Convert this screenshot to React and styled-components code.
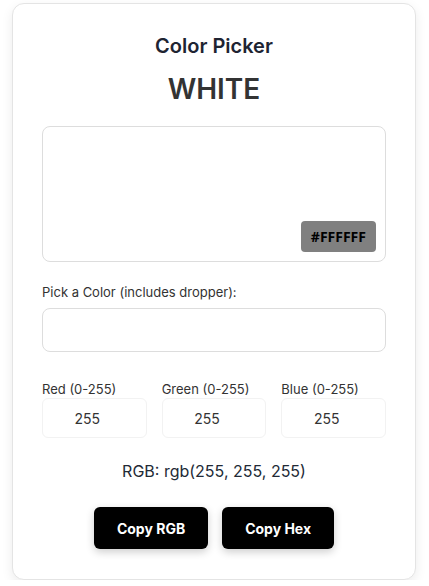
import React from 'react'
import styled, { createGlobalStyle } from 'styled-components'

const GlobalStyle = createGlobalStyle`
    body {
        margin: 0;
        background: #ffffff;
        font-family: Inter, "Open Sans", sans-serif;
    }
`

const Card = styled.div`
    box-sizing: border-box;
    width: 404px;
    margin: 3px 0 0 12px;
    padding: 27px 29px 30px;
    border: 1px solid #e4e4e4;
    border-radius: 12px;
    background: #ffffff;
    box-shadow: 0 4px 12px rgba(0, 0, 0, 0.08);
    display: flex;
    flex-direction: column;
`

const Title = styled.h2`
    margin: 0;
    text-align: center;
    font-size: 20px;
    font-weight: 600;
    color: #1e2432;
    line-height: 30px;
`

const ColorName = styled.h1`
    margin: 8px 0 17px;
    text-align: center;
    font-size: 28px;
    font-weight: 600;
    color: #333333;
    line-height: 40px;
`

const Preview = styled.div`
    position: relative;
    height: 134px;
    border: 1px solid #dddddd;
    border-radius: 8px;
    background: ${props => props.color};
`

const HexBadge = styled.span`
    position: absolute;
    right: 9px;
    bottom: 9px;
    padding: 0 10px;
    height: 31px;
    line-height: 31px;
    border-radius: 4px;
    background: #808080;
    color: #000000;
    font-family: "Open Sans", sans-serif;
    font-size: 14px;
    font-weight: 700;
`

const FieldLabel = styled.label`
    display: block;
    margin: 22px 0 8px;
    font-size: 13px;
    color: #333333;
`

const ColorInput = styled.div`
    height: 44px;
    box-sizing: border-box;
    border: 1px solid #dddddd;
    border-radius: 8px;
    background: ${props => props.color};
`

const ChannelGrid = styled.div`
    display: grid;
    grid-template-columns: repeat(3, 1fr);
    gap: 15px;
    margin-top: 28px;
`

const Channel = styled.div`
    display: flex;
    flex-direction: column;
`

const ChannelLabel = styled.label`
    font-size: 13px;
    color: #333333;
    line-height: 18px;
`

const ChannelInput = styled.input`
    box-sizing: border-box;
    width: 100%;
    height: 40px;
    padding: 0 14px 0 0;
    border: 1px solid #f2f2f2;
    border-radius: 6px;
    text-align: center;
    font-family: inherit;
    font-size: 14px;
    color: #333333;
    background: #ffffff;
    outline: none;
`

const RgbText = styled.p`
    margin: 23px 0 26px;
    text-align: center;
    font-size: 16px;
    color: #222a36;
`

const Actions = styled.div`
    display: flex;
    justify-content: center;
    gap: 14px;
`

const Button = styled.button`
    height: 42px;
    padding: 0 23px;
    border: none;
    border-radius: 6px;
    background: #000000;
    color: #ffffff;
    font-family: inherit;
    font-size: 14px;
    font-weight: 700;
    box-shadow: 0 3px 8px rgba(0, 0, 0, 0.2);
    cursor: pointer;
`

const channels = [
    { name: 'Red', value: 255 },
    { name: 'Green', value: 255 },
    { name: 'Blue', value: 255 },
]

const App = () => {
    const hex = '#FFFFFF'
    return (
        <>
            <GlobalStyle />
            <Card>
                <Title>Color Picker</Title>
                <ColorName>WHITE</ColorName>
                <Preview color={hex}>
                    <HexBadge>{hex}</HexBadge>
                </Preview>
                <FieldLabel>Pick a Color (includes dropper):</FieldLabel>
                <ColorInput color={hex} />
                <ChannelGrid>
                    {channels.map(c => (
                        <Channel key={c.name}>
                            <ChannelLabel>{c.name} (0-255)</ChannelLabel>
                            <ChannelInput type='text' defaultValue={c.value} />
                        </Channel>
                    ))}
                </ChannelGrid>
                <RgbText>RGB: rgb(255, 255, 255)</RgbText>
                <Actions>
                    <Button>Copy RGB</Button>
                    <Button>Copy Hex</Button>
                </Actions>
            </Card>
        </>
    )
}

export default App
